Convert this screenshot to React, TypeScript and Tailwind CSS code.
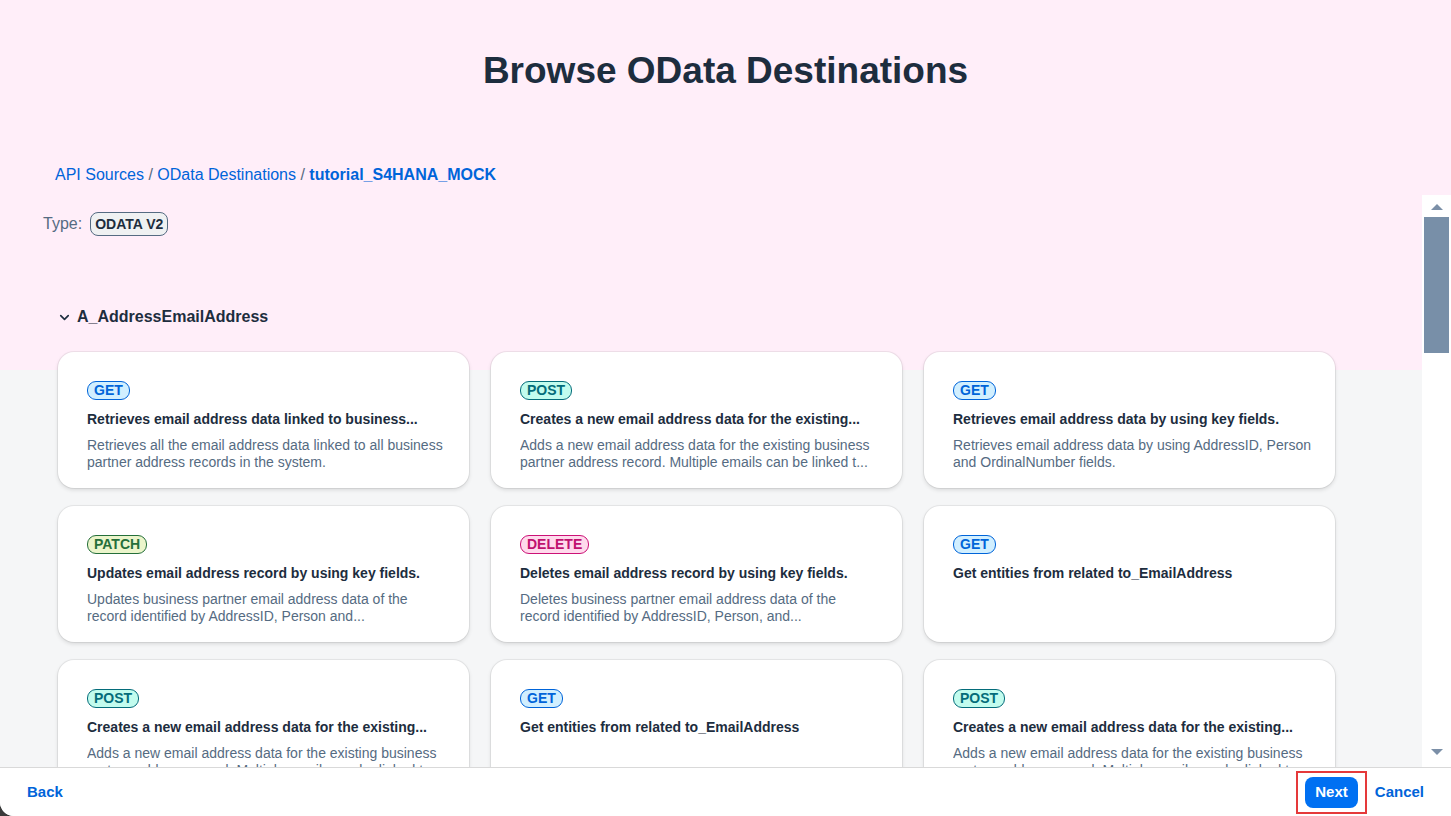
import { ChevronDown } from "lucide-react";

type Method = "GET" | "POST" | "PATCH" | "DELETE";

type Operation = {
  method: Method;
  title: string;
  lines?: string[];
};

const METHOD_STYLES: Record<Method, string> = {
  GET: "bg-[#d1efff] border-[#0064d9] text-[#0064d9]",
  POST: "bg-[#c2fcee] border-[#046c7a] text-[#046c7a]",
  PATCH: "bg-[#ebf5cb] border-[#256f3a] text-[#256f3a]",
  DELETE: "bg-[#ffdaec] border-[#cc1177] text-[#c0126f]",
};

const CREATE_TITLE = "Creates a new email address data for the existing...";
const CREATE_LINES = [
  "Adds a new email address data for the existing business",
  "partner address record. Multiple emails can be linked t...",
];

const operations: Operation[] = [
  {
    method: "GET",
    title: "Retrieves email address data linked to business...",
    lines: [
      "Retrieves all the email address data linked to all business",
      "partner address records in the system.",
    ],
  },
  { method: "POST", title: CREATE_TITLE, lines: CREATE_LINES },
  {
    method: "GET",
    title: "Retrieves email address data by using key fields.",
    lines: [
      "Retrieves email address data by using AddressID, Person",
      "and OrdinalNumber fields.",
    ],
  },
  {
    method: "PATCH",
    title: "Updates email address record by using key fields.",
    lines: [
      "Updates business partner email address data of the",
      "record identified by AddressID, Person and...",
    ],
  },
  {
    method: "DELETE",
    title: "Deletes email address record by using key fields.",
    lines: [
      "Deletes business partner email address data of the",
      "record identified by AddressID, Person, and...",
    ],
  },
  { method: "GET", title: "Get entities from related to_EmailAddress" },
  { method: "POST", title: CREATE_TITLE, lines: CREATE_LINES },
  { method: "GET", title: "Get entities from related to_EmailAddress" },
  { method: "POST", title: CREATE_TITLE, lines: CREATE_LINES },
];

function OperationCard({ op }: { op: Operation }) {
  return (
    <div className="h-[136px] shrink-0 overflow-hidden rounded-2xl bg-white pl-[29px] pr-[16px] pt-[29px] shadow-[0_0_0_1px_rgba(0,0,0,0.06),0_2px_4px_rgba(0,0,0,0.12)]">
      <div className="flex">
        <span
          className={`flex h-[19px] items-center rounded-[9px] border px-[6px] text-[14px] font-bold ${METHOD_STYLES[op.method]}`}
        >
          {op.method}
        </span>
      </div>
      <p className="mt-[11px] overflow-hidden whitespace-nowrap text-[14px] font-bold leading-[17px] text-[#1d2d3e]">
        {op.title}
      </p>
      {op.lines && (
        <div className="mt-[9px] text-[14px] leading-[17px] text-[#556b82]">
          {op.lines.map((l, i) => (
            <p key={i} className="overflow-hidden whitespace-nowrap">
              {l}
            </p>
          ))}
        </div>
      )}
    </div>
  );
}

function Scrollbar() {
  return (
    <div className="flex w-[29px] shrink-0 flex-col items-center bg-white pt-[9px] pb-[12px]">
      <div className="h-0 w-0 border-x-[6px] border-b-[6px] border-x-transparent border-b-[#7b8fa7]" />
      <div className="mt-[7px] h-[136px] w-[25px] bg-[#788fa8]" />
      <div className="flex-1" />
      <div className="h-0 w-0 border-x-[6px] border-t-[6px] border-x-transparent border-t-[#7b8fa7]" />
    </div>
  );
}

export default function App() {
  return (
    <div className="h-[816px] w-full overflow-hidden bg-[#3a3a3a] font-['Liberation_Sans',Arial,sans-serif]">
      <div className="flex h-full flex-col overflow-hidden rounded-bl-[14px] bg-[linear-gradient(#ffeef9_0_370px,#f5f6f7_370px)]">
        {/* header */}
        <div className="flex h-[195px] shrink-0 flex-col">
          <h1 className="pt-[48px] text-center text-[37px] font-bold leading-[46px] text-[#1d2d3e]">
            Browse OData Destinations
          </h1>
          <nav className="mt-[71px] pl-[55px] text-[16px] leading-[20px] text-[#0064d9]">
            <span>API Sources</span>
            <span className="text-[#556b82]"> / </span>
            <span>OData Destinations</span>
            <span className="text-[#556b82]"> / </span>
            <span className="font-bold">tutorial_S4HANA_MOCK</span>
          </nav>
        </div>

        {/* scroll area */}
        <div className="flex min-h-0 flex-1">
          <div className="min-w-0 flex-1 overflow-hidden">
            <div className="flex items-center gap-[8px] pl-[43px] pt-[17px]">
              <span className="text-[16px] text-[#556b82]">Type:</span>
              <span className="inline-flex h-[24px] items-center rounded-lg border border-[#556b82] bg-[#eff1f2] px-[4px] text-[14px] font-bold text-[#1d2d3e]">
                ODATA V2
              </span>
            </div>

            <div className="mt-[71px] flex items-center gap-[5px] pl-[57px]">
              <ChevronDown size={15} strokeWidth={2.6} className="text-[#1d2d3e]" />
              <span className="text-[16px] font-bold leading-[20px] text-[#1d2d3e]">
                A_AddressEmailAddress
              </span>
            </div>

            <div className="ml-[58px] mt-[25px] grid w-[1277px] grid-cols-3 gap-x-[22px] gap-y-[18px]">
              {operations.map((op, i) => (
                <OperationCard key={i} op={op} />
              ))}
            </div>
          </div>
          <Scrollbar />
        </div>

        {/* footer */}
        <div className="flex h-[49px] shrink-0 items-center border-t border-[#d9d9d9] bg-white pl-[27px] pr-[27px]">
          <button className="text-[15px] font-bold text-[#0064d9]">Back</button>
          <div className="flex-1" />
          <div className="flex items-center border-2 border-[#e5393a] px-[7px] py-[4px]">
            <button className="h-[31px] rounded-lg bg-[#0070f2] px-[10px] text-[15px] font-bold text-white">
              Next
            </button>
          </div>
          <button className="ml-[8px] text-[15px] font-bold text-[#0064d9]">Cancel</button>
        </div>
      </div>
    </div>
  );
}
